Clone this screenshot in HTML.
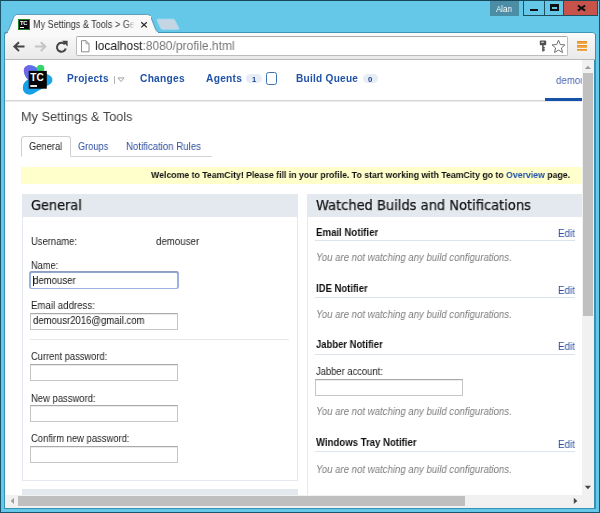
<!DOCTYPE html>
<html>
<head>
<meta charset="utf-8">
<title>My Settings &amp; Tools</title>
<style>
*{box-sizing:border-box;margin:0;padding:0}
html,body{width:600px;height:513px;overflow:hidden;background:#66c8e8;font-family:"Liberation Sans",sans-serif}
.abs{position:absolute}
.t{position:absolute;white-space:nowrap;transform-origin:0 0;will-change:transform}
#win{position:absolute;left:0;top:0;width:600px;height:513px;background:#66c8e8;overflow:hidden}
#page{left:5.200px;top:60px;width:576.800px;height:434.500px;background:#fff;overflow:hidden}
#pin{left:-5.200px;top:-60px;width:600px;height:513px}
.hdr{background:#e4e9ef;height:23px}
.panel{border:1px solid #e4e9ef;background:#fff}
.inp{border:1px solid #c6c6c6;border-top-color:#a9a9a9;background:#fff;height:16.500px;box-shadow:inset 0 1px 0 rgba(0,0,0,0.080)}
.secline{height:1px;background:#dde3ea}
.badge{background:#e7edf6;border-radius:5px;height:9.6px}
</style>
</head>
<body>
<div id="win">

<!-- window frame -->
<div class="abs" style="left:0;top:0;width:600px;height:1.3px;background:#17485a"></div>
<div class="abs" style="left:0;top:0;width:1.400px;height:513px;background:#1a566b"></div>
<div class="abs" style="left:598.700px;top:0;width:1.300px;height:513px;background:#1a566b"></div>
<div class="abs" style="left:0;top:511.8px;width:600px;height:1.2px;background:#1a566b"></div>
<div class="abs" style="left:4.200px;top:34px;width:591.700px;height:474.700px;background:#3592b4"></div>
<div class="abs" style="left:5.200px;top:34px;width:589.300px;height:473.600px;background:#fff"></div>

<!-- title bar -->
<div class="abs" style="left:490px;top:1px;width:29px;height:14.5px;background:#4a8da5"></div>
<div class="abs" style="left:523px;top:1px;width:74.5px;height:15px;background:#1f4f5e"></div>
<div class="abs" style="left:524px;top:1px;width:19.5px;height:13.8px;background:#66c8e8"></div>
<div class="abs" style="left:544.5px;top:1px;width:18.5px;height:13.8px;background:#66c8e8"></div>
<div class="abs" style="left:563.8px;top:1px;width:33px;height:13.8px;background:#c8534b"></div>
<div class="abs" style="left:530px;top:9.3px;width:7.5px;height:2.2px;background:#111"></div>
<div class="abs" style="left:550px;top:4.400px;width:8.500px;height:6.700px;background:#111"></div><div class="abs" style="left:552px;top:6.900px;width:4.500px;height:2.400px;background:#66c8e8"></div>
<svg class="abs" style="left:575.500px;top:4px" width="11" height="9" viewBox="0 0 11 9"><path d="M1.900 1.500 L9.100 6.600 M9.100 1.500 L1.900 6.600" stroke="#111" stroke-width="2.100" fill="none"/></svg>

<!-- tab strip -->
<svg class="abs" style="left:0;top:10px" width="200" height="26" viewBox="0 0 200 26">
  <path d="M158 9.100 L173 9.100 Q174.300 9.100 174.900 10.300 L178.900 18.200 Q179.400 19.400 178 19.400 L162.500 19.400 Q161.300 19.400 160.700 18.300 L157 10.300 Q156.500 9.100 158 9.100 Z" fill="#c4d6e4" stroke="#a5d6ec" stroke-width="0.900"/>
  <path d="M4 23 C7.500 22.500 8 21 9 19 L13.500 7.500 Q14.500 4.400 17 4.400 L147.500 4.400 Q150 4.400 151 7.500 L155.500 19 C156.500 21 157 22.500 160.500 23 Z" fill="#f9f9f9" stroke="#4d93ae" stroke-width="0.900"/>
</svg>
<div class="abs" style="left:5.200px;top:32px;width:589.400px;height:28px;background:#3f97b8;border-radius:3px 3px 0 0"></div>
<div class="abs" style="left:5.200px;top:33px;width:589.400px;height:27px;background:linear-gradient(#fbfbfb,#f4f4f4 30%,#e9e9e9);border-radius:2.500px 2.500px 0 0"></div>
<div class="abs" style="left:5.200px;top:58.600px;width:589.400px;height:1.400px;background:#b9b9b9"></div>
<div class="abs" style="left:7.500px;top:31.500px;width:150.500px;height:3px;background:#f9f9f9"></div>

<!-- favicon -->
<div class="abs" style="left:18px;top:18.500px;width:12px;height:11.500px;background:#0a0a0a;border:1px solid #1d7f2a"></div>
<div class="abs" style="left:20.300px;top:26.600px;width:3.500px;height:1px;background:#fff"></div>
<div class="t" style="left:20px;top:20.300px;font-size:5.800px;line-height:6px;font-weight:bold;color:#fff;letter-spacing:-0.200px">TC</div>

<!-- toolbar buttons -->
<svg class="abs" style="left:11px;top:39px" width="60" height="15" viewBox="0 0 60 15">
  <path d="M3.200 7.600 L13.500 7.600 M8 3.200 L3.400 7.600 L8 12" stroke="#454545" stroke-width="2" fill="none"/>
  <path d="M24 7.600 L34.300 7.600 M29.800 3.200 L34.300 7.600 L29.800 12" stroke="#c4c4c4" stroke-width="2" fill="none"/>
  <path d="M53.800 5.200 A4.500 4.500 0 1 0 54.800 9.500" stroke="#454545" stroke-width="2" fill="none"/>
  <path d="M51 1.800 L56.600 1.800 L56.600 7.400 Z" fill="#454545"/>
</svg>
<div class="abs" style="left:75.500px;top:36px;width:492.300px;height:19.500px;background:#fff;border:1px solid #bcbcbc;border-top-color:#a9a9a9;border-radius:2px"></div>
<svg class="abs" style="left:80px;top:40px" width="11" height="13" viewBox="0 0 11 13"><path d="M1.500 0.700 L6 0.700 L9 3.700 L9 11.800 L1.500 11.800 Z" fill="#fff" stroke="#8c8c8c" stroke-width="1"/><path d="M6 0.700 L6 3.700 L9 3.700" fill="none" stroke="#8c8c8c" stroke-width="0.800"/></svg>
<!-- key -->
<svg class="abs" style="left:539px;top:39.500px" width="9" height="13" viewBox="0 0 9 13"><rect x="0.800" y="0.500" width="6.400" height="4.800" rx="1" fill="#4f4f4f"/><rect x="2.200" y="1.700" width="2.600" height="1.100" fill="#e0e0e0"/><path d="M3.900 5 L3.900 11.500 M3.900 7.800 L5.800 7.800 M3.900 10 L5.800 10" stroke="#4f4f4f" stroke-width="1.500" fill="none"/></svg>
<!-- star -->
<svg class="abs" style="left:551px;top:39px" width="15" height="15" viewBox="0 0 15 15"><path d="M7.500 1.200 L9.300 5.500 L13.900 5.900 L10.400 9 L11.500 13.500 L7.500 11.100 L3.500 13.500 L4.600 9 L1.100 5.900 L5.700 5.500 Z" fill="#fff" stroke="#6e6e6e" stroke-width="1"/></svg>
<!-- menu -->
<div class="abs" style="left:577px;top:41.200px;width:9.800px;height:2.400px;background:linear-gradient(#e58a25,#f3b656)"></div>
<div class="abs" style="left:577px;top:45.200px;width:9.800px;height:2.400px;background:linear-gradient(#e58a25,#f3b656)"></div>
<div class="abs" style="left:577px;top:49.100px;width:9.800px;height:2.400px;background:linear-gradient(#e58a25,#f3b656)"></div>

<div class="t" id="tt" style="left:32.69px;top:17.60px;font-size:10.4px;line-height:14px;font-family:'Liberation Sans',sans-serif;color:#333;max-width:124px;overflow:hidden;transform:scaleX(0.8719);">My Settings &amp; Tools &gt; General</div>
<div class="t" id="url" style="left:94.60px;top:37.30px;font-size:13.3px;line-height:18px;font-family:'Liberation Sans',sans-serif;color:#1a1a1a;transform:scaleX(0.9041);">localhost<span style="color:#777">:8080/profile.html</span></div>
<div class="t" id="usr" style="left:496.44px;top:2.50px;font-size:8.8px;line-height:13px;font-family:'Liberation Sans',sans-serif;color:#fff;transform:scaleX(0.9109);">Alan</div>
<div class="abs" style="left:125px;top:16px;width:26px;height:15px;background:linear-gradient(90deg,rgba(249,249,249,0),#f9f9f9 10px)"></div>
<svg class="abs" style="left:140px;top:20.500px" width="8" height="8" viewBox="0 0 8 8"><path d="M1.300 1.200 L6.800 6.400 M6.800 1.200 L1.300 6.400" stroke="#2b2b2b" stroke-width="1.300" fill="none"/></svg>


<!-- scrollbars -->
<div class="abs" style="left:582px;top:60px;width:12px;height:447.500px;background:#f1f1f1"></div>
<div class="abs" style="left:583px;top:72.500px;width:10px;height:243px;background:#c0c0c0"></div>
<svg class="abs" style="left:584px;top:64.500px" width="8" height="5" viewBox="0 0 8 5"><path d="M0.800 4 L3.900 0.700 L7 4 Z" fill="#9d9d9d"/></svg>
<svg class="abs" style="left:584px;top:485px" width="8" height="5" viewBox="0 0 8 5"><path d="M0.800 0.800 L3.900 4.300 L7 0.800 Z" fill="#454545"/></svg>
<div class="abs" style="left:5.200px;top:494.500px;width:577px;height:13px;background:#f1f1f1"></div>
<div class="abs" style="left:18.300px;top:496.300px;width:446.700px;height:9.400px;background:#bfbfbf"></div>
<svg class="abs" style="left:10px;top:497px" width="5" height="8" viewBox="0 0 5 8"><path d="M4 0.800 L0.700 3.900 L4 7 Z" fill="#9d9d9d"/></svg>
<svg class="abs" style="left:572.500px;top:497px" width="5" height="8" viewBox="0 0 5 8"><path d="M0.800 0.800 L4.300 3.900 L0.800 7 Z" fill="#454545"/></svg>

<!-- PAGE -->
<div class="abs" id="page">
<div class="abs" id="pin">

<!-- header -->
<div class="abs" style="left:0;top:100px;width:600px;height:2px;background:linear-gradient(#cfcfcf,#f2f2f2)"></div>
<svg class="abs" style="left:16px;top:60px" width="44" height="40" viewBox="16 60 44 40">
  <defs><linearGradient id="lg1" x1="0" y1="0" x2="1" y2="0.300"><stop offset="0" stop-color="#8458e6"/><stop offset="1" stop-color="#3f86ea"/></linearGradient></defs>
  <path d="M24 72 C22.800 66 29 63.300 34.500 66.500 L38 68.500 L50.500 76 C53.500 78 53 83 49.500 84.500 L33.500 93.500 C28 96.500 22 92.500 23 86.500 C23.500 83.500 25.500 81 28 79.500 C26 77.500 24.500 75 24 72 Z" fill="#1ea6e9"/>
  <path d="M24 72 C22.800 66 29 63.300 34.500 66.500 L40 70 L30 81 C26.500 79 24.500 75.500 24 72 Z" fill="url(#lg1)"/>
  <circle cx="40.600" cy="68.400" r="3.700" fill="#35d46b"/>
  <path d="M23 86.500 C23.500 83 26 80.500 29 79.500 L40 88 L33.500 93.500 C28 96.500 22 92.500 23 86.500 Z" fill="#179fe8"/>
  <rect x="28.700" y="70.900" width="18.100" height="17.800" fill="#060606"/>
  <text x="30.300" y="81" font-family="Liberation Sans, sans-serif" font-weight="bold" font-size="11" fill="#fff" textLength="13.400" lengthAdjust="spacingAndGlyphs">TC</text>
  <rect x="30.300" y="85.100" width="6.700" height="1.800" fill="#fff"/>
</svg>
<div class="abs" style="left:114px;top:76px;width:1px;height:7.500px;background:#b5b5b5"></div>
<svg class="abs" style="left:116.500px;top:77px" width="8" height="6" viewBox="0 0 8 6"><path d="M0.900 0.900 L7.100 0.900 L4 4.600 Z" fill="#fff" stroke="#9a9a9a" stroke-width="0.900"/></svg>
<div class="abs badge" style="left:246.200px;top:73.900px;width:15.600px"></div>
<div class="abs" style="left:266px;top:72.200px;width:10.500px;height:13.200px;border:1.300px solid #3b73b9;border-radius:2.500px"></div>
<div class="abs badge" style="left:362.500px;top:73.900px;width:15px"></div>
<div class="abs" style="left:545px;top:98px;width:40px;height:2.800px;background:#1552a8"></div>

<!-- tabs -->
<div class="abs" style="left:22px;top:155.600px;width:189.500px;height:1px;background:#d2d2d2"></div>
<div class="abs" style="left:21.300px;top:136.200px;width:49.800px;height:20.400px;border:1px solid #cfcfcf;border-bottom:1px solid #fff;border-radius:3px 3px 0 0;background:#fff"></div>

<!-- banner -->
<div class="abs" style="left:21px;top:167px;width:565px;height:16.500px;background:#ffffcc"></div>

<!-- left panel -->
<div class="abs panel" style="left:21.500px;top:194px;width:276.500px;height:287px"></div>
<div class="abs hdr" style="left:21.500px;top:194px;width:276.500px"></div>
<div class="abs" style="left:29.300px;top:271.400px;width:149.500px;height:18.100px;border-radius:2.500px;background:linear-gradient(#8c9abb,#9bb2e1 3px)"></div><div class="abs" style="left:30.900px;top:273px;width:146.300px;height:14.900px;border-radius:1px;background:#fff"></div>
<div class="abs" style="left:33.300px;top:275.500px;width:1px;height:10.500px;background:#222"></div>
<div class="abs inp" style="left:30px;top:312.800px;width:148.300px;height:16.800px"></div>
<div class="abs" style="left:30px;top:339px;width:259px;height:1px;background:#e6e6e6"></div>
<div class="abs inp" style="left:30px;top:363.600px;width:148.300px;height:17px"></div>
<div class="abs inp" style="left:30px;top:404.600px;width:148.300px;height:17px"></div>
<div class="abs inp" style="left:30px;top:445.600px;width:148.300px;height:17px"></div>
<div class="abs" style="left:21.500px;top:489.300px;width:276.500px;height:10px;background:#e4e9ef"></div>

<!-- right panel -->
<div class="abs panel" style="left:307px;top:194px;width:290px;height:330px"></div>
<div class="abs hdr" style="left:307px;top:194px;width:290px"></div>
<div class="abs secline" style="left:315px;top:240px;width:260px"></div>
<div class="abs secline" style="left:315px;top:296.800px;width:260px"></div>
<div class="abs secline" style="left:315px;top:353.800px;width:260px"></div>
<div class="abs inp" style="left:315px;top:379.200px;width:148.300px"></div>
<div class="abs secline" style="left:315px;top:451px;width:260px"></div>

<div class="t" id="n1" style="left:67.45px;top:71.70px;font-size:10.1px;line-height:14px;font-family:'Liberation Sans',sans-serif;font-weight:bold;color:#2053a8;letter-spacing:0.25px;transform:scaleX(0.9979);">Projects</div>
<div class="t" id="n2" style="left:139.70px;top:71.70px;font-size:10.1px;line-height:14px;font-family:'Liberation Sans',sans-serif;font-weight:bold;color:#2053a8;letter-spacing:0.25px;transform:scaleX(1.0116);">Changes</div>
<div class="t" id="n3" style="left:205.70px;top:71.70px;font-size:10.1px;line-height:14px;font-family:'Liberation Sans',sans-serif;font-weight:bold;color:#2053a8;letter-spacing:0.25px;transform:scaleX(1.0136);">Agents</div>
<div class="t" id="n4" style="left:296.00px;top:71.70px;font-size:10.1px;line-height:14px;font-family:'Liberation Sans',sans-serif;font-weight:bold;color:#2053a8;letter-spacing:0.25px;transform:scaleX(1.0000);">Build Queue</div>
<div class="t" id="n5" style="left:555.58px;top:72.70px;font-size:10.7px;line-height:15px;font-family:'Liberation Sans',sans-serif;color:#4765b3;transform:scaleX(0.9075);">demouser</div>
<div class="t" id="b1" style="left:251.97px;top:73.70px;font-size:7.6px;line-height:11px;font-family:'Liberation Sans',sans-serif;font-weight:bold;color:#1d3f8c;transform:scaleX(0.9872);">1</div>
<div class="t" id="b0" style="left:367.77px;top:73.70px;font-size:7.6px;line-height:11px;font-family:'Liberation Sans',sans-serif;font-weight:bold;color:#1d3f8c;transform:scaleX(1.0344);">0</div>
<div class="t" id="ti" style="left:20.79px;top:108.20px;font-size:13.6px;line-height:18px;font-family:'Liberation Sans',sans-serif;color:#444;transform:scaleX(0.9358);">My Settings &amp; Tools</div>
<div class="t" id="t1" style="left:28.79px;top:140.20px;font-size:10.4px;line-height:14px;font-family:'Liberation Sans',sans-serif;color:#1c1c1c;transform:scaleX(0.8986);">General</div>
<div class="t" id="t2" style="left:78.49px;top:140.20px;font-size:10.4px;line-height:14px;font-family:'Liberation Sans',sans-serif;color:#2f4f9f;transform:scaleX(0.8868);">Groups</div>
<div class="t" id="t3" style="left:125.59px;top:140.20px;font-size:10.4px;line-height:14px;font-family:'Liberation Sans',sans-serif;color:#2f4f9f;transform:scaleX(0.9265);">Notification Rules</div>
<div class="t" id="bn" style="left:150.90px;top:168.40px;font-size:9.9px;line-height:14px;font-family:'Liberation Sans',sans-serif;font-weight:bold;color:#111;transform:scaleX(0.8831);">Welcome to TeamCity! Please fill in your profile. To start working with TeamCity go to <span style="color:#1f52a8">Overview</span> page.</div>
<div class="t" id="h1" style="left:30.50px;top:196.80px;font-size:13.3px;line-height:18px;font-family:'DejaVu Sans','Liberation Sans',sans-serif;color:#151515;-webkit-text-stroke:0.25px #151515;transform:scaleX(0.9687);">General</div>
<div class="t" id="l1" style="left:30.69px;top:234.70px;font-size:10.2px;line-height:14px;font-family:'Liberation Sans',sans-serif;color:#1c1c1c;transform:scaleX(0.9234);">Username:</div>
<div class="t" id="l1v" style="left:156.39px;top:234.70px;font-size:10.2px;line-height:14px;font-family:'Liberation Sans',sans-serif;color:#1c1c1c;transform:scaleX(0.9514);">demouser</div>
<div class="t" id="l2" style="left:30.69px;top:258.50px;font-size:10.2px;line-height:14px;font-family:'Liberation Sans',sans-serif;color:#1c1c1c;transform:scaleX(0.9065);">Name:</div>
<div class="t" id="i2" style="left:33.29px;top:274.20px;font-size:10.2px;line-height:14px;font-family:'Liberation Sans',sans-serif;color:#111;transform:scaleX(0.9404);">demouser</div>
<div class="t" id="l3" style="left:30.69px;top:298.50px;font-size:10.2px;line-height:14px;font-family:'Liberation Sans',sans-serif;color:#1c1c1c;transform:scaleX(0.9469);">Email address:</div>
<div class="t" id="i3" style="left:32.99px;top:314.40px;font-size:10.2px;line-height:14px;font-family:'Liberation Sans',sans-serif;color:#111;transform:scaleX(0.9366);">demousr2016@gmail.com</div>
<div class="t" id="l4" style="left:30.69px;top:350.20px;font-size:10.2px;line-height:14px;font-family:'Liberation Sans',sans-serif;color:#1c1c1c;transform:scaleX(0.9156);">Current password:</div>
<div class="t" id="l5" style="left:30.69px;top:392.00px;font-size:10.2px;line-height:14px;font-family:'Liberation Sans',sans-serif;color:#1c1c1c;transform:scaleX(0.9261);">New password:</div>
<div class="t" id="l6" style="left:30.69px;top:432.30px;font-size:10.2px;line-height:14px;font-family:'Liberation Sans',sans-serif;color:#1c1c1c;transform:scaleX(0.9254);">Confirm new password:</div>
<div class="t" id="h2" style="left:315.90px;top:197.00px;font-size:13.3px;line-height:18px;font-family:'DejaVu Sans','Liberation Sans',sans-serif;color:#151515;-webkit-text-stroke:0.25px #151515;transform:scaleX(0.9800);">Watched Builds and Notifications</div>
<div class="t" id="s1" style="left:315.99px;top:225.60px;font-size:10.4px;line-height:14px;font-family:'Liberation Sans',sans-serif;font-weight:bold;color:#111;transform:scaleX(0.9289);">Email Notifier</div>
<div class="t" id="s2" style="left:315.99px;top:282.40px;font-size:10.4px;line-height:14px;font-family:'Liberation Sans',sans-serif;font-weight:bold;color:#111;transform:scaleX(0.9141);">IDE Notifier</div>
<div class="t" id="s3" style="left:315.99px;top:338.40px;font-size:10.4px;line-height:14px;font-family:'Liberation Sans',sans-serif;font-weight:bold;color:#111;transform:scaleX(0.9099);">Jabber Notifier</div>
<div class="t" id="s4" style="left:315.99px;top:435.90px;font-size:10.4px;line-height:14px;font-family:'Liberation Sans',sans-serif;font-weight:bold;color:#111;transform:scaleX(0.9219);">Windows Tray Notifier</div>
<div class="t" id="e1" style="left:558.49px;top:226.70px;font-size:10.2px;line-height:14px;font-family:'Liberation Sans',sans-serif;color:#2f4f9f;transform:scaleX(0.9628);">Edit</div>
<div class="t" id="e2" style="left:558.49px;top:283.50px;font-size:10.2px;line-height:14px;font-family:'Liberation Sans',sans-serif;color:#2f4f9f;transform:scaleX(0.9628);">Edit</div>
<div class="t" id="e3" style="left:558.49px;top:339.80px;font-size:10.2px;line-height:14px;font-family:'Liberation Sans',sans-serif;color:#2f4f9f;transform:scaleX(0.9628);">Edit</div>
<div class="t" id="e4" style="left:558.49px;top:437.80px;font-size:10.2px;line-height:14px;font-family:'Liberation Sans',sans-serif;color:#2f4f9f;transform:scaleX(0.9628);">Edit</div>
<div class="t" id="y1" style="left:316.19px;top:251.20px;font-size:10.3px;line-height:14px;font-family:'Liberation Sans',sans-serif;font-style:italic;color:#7d7d7d;transform:scaleX(0.9320);">You are not watching any build configurations.</div>
<div class="t" id="y2" style="left:316.19px;top:308.20px;font-size:10.3px;line-height:14px;font-family:'Liberation Sans',sans-serif;font-style:italic;color:#7d7d7d;transform:scaleX(0.9320);">You are not watching any build configurations.</div>
<div class="t" id="y3" style="left:316.19px;top:405.20px;font-size:10.3px;line-height:14px;font-family:'Liberation Sans',sans-serif;font-style:italic;color:#7d7d7d;transform:scaleX(0.9320);">You are not watching any build configurations.</div>
<div class="t" id="y4" style="left:316.19px;top:462.60px;font-size:10.3px;line-height:14px;font-family:'Liberation Sans',sans-serif;font-style:italic;color:#7d7d7d;transform:scaleX(0.9320);">You are not watching any build configurations.</div>
<div class="t" id="ja" style="left:315.69px;top:364.60px;font-size:10.2px;line-height:14px;font-family:'Liberation Sans',sans-serif;color:#1c1c1c;transform:scaleX(0.9215);">Jabber account:</div>

</div>
</div>

</div>
</body>
</html>
